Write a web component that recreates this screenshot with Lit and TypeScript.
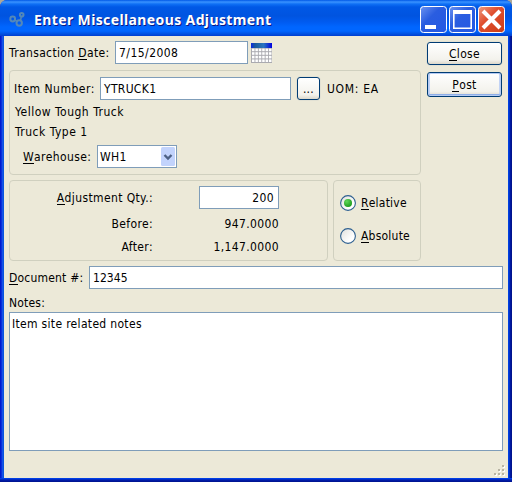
import { LitElement, html, css, svg } from "lit";
import { customElement, property } from "lit/decorators.js";

@customElement("group-box")
class GroupBox extends LitElement {
  static styles = css`
    :host { display: block; box-sizing: border-box; border: 1px solid #d0d0bf; border-radius: 4px; }
  `;
  render() { return html`<slot></slot>`; }
}

@customElement("radio-option")
class RadioOption extends LitElement {
  @property({ type: Boolean }) checked = false;
  static styles = css`
    :host { display: flex; align-items: center; height: 16px; gap: 5px; }
    svg { display: block; flex: none; }
  `;
  render() {
    return html`<svg width="16" height="16" viewBox="0 0 16 16">
        <defs>
          <linearGradient id="face" x1="0" y1="0" x2="1" y2="1"><stop offset="0" stop-color="#dededa"/><stop offset=".7" stop-color="#fff"/></linearGradient>
          <radialGradient id="dot" cx=".35" cy=".3" r=".75"><stop offset="0" stop-color="#60d85a"/><stop offset="1" stop-color="#1b9a1b"/></radialGradient>
        </defs>
        <circle cx="8" cy="8" r="7.4" fill="url(#face)" stroke="#2d5f8f" stroke-width="1.1"/>
        ${this.checked ? svg`<circle cx="8" cy="8" r="4" fill="url(#dot)"/>` : null}
      </svg><slot></slot>`;
  }
}

@customElement("app-root")
class AppRoot extends LitElement {
  static styles = css`
    * { box-sizing: border-box; }
    :host {
      display: block; width: 512px; height: 482px; overflow: hidden; background: #aca899;
      font: 12px/16px "DejaVu Sans Condensed", "DejaVu Sans", sans-serif; color: #000; letter-spacing: .32px;
    }
    u { text-decoration: none; display: inline-block; height: 15px; line-height: 16px; border-bottom: 1px solid #000; vertical-align: top; }
    .window {
      height: 482px; display: flex; flex-direction: column; border-radius: 7px 7px 0 0; overflow: hidden;
      background: linear-gradient(90deg, #0019cf 0 1px, #0831d9 1px 2px, #1650e8 2px 3px, #0855dd 3px 4px, #0048f0 4px 508px, #0040e0 508px 509px, #0030c8 509px 510px, #0018a0 510px 511px, #00138c 511px);
    }
    .title {
      height: 36px; flex: none; display: flex; align-items: center; padding: 3px 7px 0 9px;
      background: linear-gradient(180deg, #0058e6 0, #3a93ff 2px, #0f70f5 4px, #0058e6 7px, #0054e0 16px, #005bf0 22px, #0066ff 27px, #0066ff 31px, #0050e0 34px, #003dd0 36px);
    }
    .gears { width: 18px; height: 18px; flex: none; }
    .name {
      flex: 1; margin-left: 7px; color: #fff; white-space: nowrap; text-shadow: 1px 1px #0a1883;
      font: bold 14px/20px "Noto Sans", "Open Sans", sans-serif; letter-spacing: .38px;
    }
    .caps { display: flex; gap: 2px; }
    .caps svg { display: block; }
    .body { flex: 1; margin: 0 4px; background: #ece9d8; padding: 5px 5px 0; display: flex; flex-direction: column; }
    .foot { height: 4px; flex: none; background: linear-gradient(#0048f1, #0035d8 1px, #001dab 2px, #00138c); }
    .upper { display: flex; justify-content: space-between; height: 220px; }
    .left { width: 412px; }
    .row { display: flex; align-items: center; height: 23px; white-space: nowrap; }
    .field { height: 23px; border: 1px solid #7f9db9; background: #fff; padding: 3px 3px; line-height: 16px; white-space: nowrap; }
    .date { width: 133px; margin-right: 3px; letter-spacing: .45px; }
    .lead { flex: none; }
    .w-date { width: 106px; letter-spacing: .36px; }
    .item { height: 105px; margin-top: 6px; padding: 6px 5px 0 4px; }
    .w-item { width: 86px; letter-spacing: .5px; }
    .item-input { width: 191px; margin-right: 6px; }
    .uom { letter-spacing: .7px; }
    .desc { line-height: 20px; margin: 2px 0 0 1px; letter-spacing: .5px; }
    .wh { margin-top: 3px; padding-left: 9px; }
    .w-wh { width: 74px; letter-spacing: .4px; }
    .combo { width: 80px; padding: 3px 1px 1px 2px; display: flex; justify-content: space-between; }
    .combo svg { margin-top: -2px; display: block; }
    .btn {
      display: flex; justify-content: center; border: 1px solid #003c74; border-radius: 3px;
      background: linear-gradient(#fff, #f3f2ec 80%, #dcd8cb); height: 23px; padding-top: 3px;
      box-shadow: 0 0 0 .5px #d8d9cf;
    }
    .dots { width: 23px; margin-right: 7px; }
    .side { width: 75px; margin-right: 1px; padding-top: 1px; display: flex; flex-direction: column; gap: 7px; }
    .post { height: 25px; padding-top: 4px; box-shadow: inset 0 0 0 1px #b5cbf3, inset 0 -2px #8eaee8, inset 2px 0 #c2d3f5, inset -2px 0 #c2d3f5; }
    .pair { display: flex; gap: 5px; margin-top: 5px; }
    .qty { width: 319px; height: 81px; padding-top: 5px; }
    .nums { display: grid; grid-template-columns: 143px 46px 80px; grid-template-rows: 23px 29px 17px; align-items: center; text-align: right; white-space: nowrap; letter-spacing: .38px; }
    .val { grid-column: 3; }
    .field.val { padding-right: 4px; }
    .mode { width: 88px; height: 81px; padding: 14px 0 0 6px; letter-spacing: .22px; }
    .mode radio-option + radio-option { margin-top: 17px; }
    .doc { margin-top: 5px; letter-spacing: .2px; }
    .w-doc { width: 80px; }
    .grow { flex: 1; letter-spacing: 0.05px; }
    .notes-label { margin-top: 6px; height: 17px; letter-spacing: .2px; }
    .notes { height: 139px; }
    .doc, .notes { margin-right: 0; width: 494px; }
    .notes { padding-left: 2px; }
    .body { padding-right: 4px; }
    .side { margin-right: 2px; }
    .grip { align-self: flex-end; margin: 14px -3px 0 0; display: block; }
  `;

  calendar() {
    const rows = [0, 1, 2, 3], cols = [0, 1, 2, 3, 4, 5];
    return html`<svg width="22" height="22" viewBox="0 0 22 22">
      <defs><linearGradient id="cal"><stop offset="0" stop-color="#0a2ae0"/><stop offset=".2" stop-color="#1a5a9a"/><stop offset=".6" stop-color="#2a76c0"/><stop offset="1" stop-color="#0000e0"/></linearGradient></defs>
      <rect x="0" y="1" width="21" height="20" fill="#aaaab0"/>
      <rect x="0" y="1" width="21" height="5" fill="url(#cal)"/>
      ${rows.map(r => cols.map(c => svg`<rect x=${1 + c * 3.4} y=${6.6 + r * 3.6} width="2.500" height="2.600" fill="#fff"/>`))}
    </svg>`;
  }

  grip() {
    const dots = [[8, 0], [4, 4], [8, 4], [0, 8], [4, 8], [8, 8]];
    return html`<svg class="grip" width="13" height="13" viewBox="0 0 13 13">
      ${dots.map(([x, y]) => svg`<rect x=${x + 1} y=${y + 1} width="2" height="2" fill="#fff"/><rect x=${x} y=${y} width="2" height="2" fill="#b8b4a3"/>`)}
    </svg>`;
  }

  render() {
    return html`<div class="window">
      <div class="title">
        <svg class="gears" viewBox="0 0 18 18" fill="none" stroke="#5488b8" stroke-width="2">
          <circle cx="3.700" cy="8" r="2.400"/><circle cx="12.700" cy="3.800" r="1.800"/><circle cx="10.200" cy="12" r="2.700"/>
          <path d="M6 9L8 10.500M11.500 9.500L12.300 6" stroke-width="1.500"/>
        </svg>
        <div class="name">Enter Miscellaneous Adjustment</div>
        <div class="caps">
          <svg width="27" height="27"><defs>
            <linearGradient id="b" x1="0" y1="0" x2="1" y2="1"><stop offset="0" stop-color="#6c93f0"/><stop offset=".4" stop-color="#2a5de0"/><stop offset="1" stop-color="#2458e4"/></linearGradient></defs>
            <rect x=".5" y=".5" width="26" height="26" rx="3" fill="url(#b)" stroke="#fff"/><rect x="5" y="19" width="11" height="4" fill="#fff"/></svg>
          <svg width="27" height="27"><defs>
            <linearGradient id="b2" x1="0" y1="0" x2="1" y2="1"><stop offset="0" stop-color="#6c93f0"/><stop offset=".4" stop-color="#2a5de0"/><stop offset="1" stop-color="#2458e4"/></linearGradient></defs>
            <rect x=".5" y=".5" width="26" height="26" rx="3" fill="url(#b2)" stroke="#fff"/><path d="M4.800 7V22.200H22.200V7" fill="none" stroke="#fff" stroke-width="1.600"/><path d="M4 4H23V8H4Z" fill="#fff"/></svg>
          <svg width="27" height="27"><defs>
            <linearGradient id="r" x1="0" y1="0" x2="1" y2="1"><stop offset="0" stop-color="#f09c80"/><stop offset=".4" stop-color="#e05030"/><stop offset="1" stop-color="#cc3c14"/></linearGradient></defs>
            <rect x=".5" y=".5" width="26" height="26" rx="3" fill="url(#r)" stroke="#fff"/><path d="M5 5L22 22M22 5L5 22" stroke="#fff" stroke-width="4"/></svg>
        </div>
      </div>
      <div class="body">
        <div class="upper">
          <div class="left">
            <div class="row"><span class="lead w-date">Transaction <u>D</u>ate:</span><div class="field date">7/15/2008</div>${this.calendar()}</div>
            <group-box class="item">
              <div class="row"><span class="lead w-item">Item Number:</span><div class="field item-input">YTRUCK1</div><div class="btn dots">...</div><span class="uom">UOM: EA</span></div>
              <div class="desc"><div>Yellow Tough Truck</div><div>Truck Type 1</div></div>
              <div class="row wh"><span class="lead w-wh"><u>W</u>arehouse:</span>
                <div class="field combo"><span>WH1</span><svg width="14" height="19"><rect width="14" height="19" rx="1.500" fill="#c2d3fc"/><path d="M3.500 8L7 11.500L10.500 8" fill="none" stroke="#4d6185" stroke-width="2.400"/></svg></div></div>
            </group-box>
            <div class="pair">
              <group-box class="qty"><div class="nums">
                <span><u>A</u>djustment Qty.:</span><div class="field val">200</div>
                <span>Before:</span><span class="val">947.0000</span>
                <span>After:</span><span class="val">1,147.0000</span>
              </div></group-box>
              <group-box class="mode">
                <radio-option checked><span><u>R</u>elative</span></radio-option>
                <radio-option><span><u>A</u>bsolute</span></radio-option>
              </group-box>
            </div>
          </div>
          <div class="side"><div class="btn"><span><u>C</u>lose</span></div><div class="btn post"><span><u>P</u>ost</span></div></div>
        </div>
        <div class="row doc"><span class="lead w-doc"><u>D</u>ocument #:</span><div class="field grow">12345</div></div>
        <div class="notes-label">Notes:</div>
        <div class="field notes">Item site related notes</div>
        ${this.grip()}
      </div>
      <div class="foot"></div>
    </div>`;
  }
}
